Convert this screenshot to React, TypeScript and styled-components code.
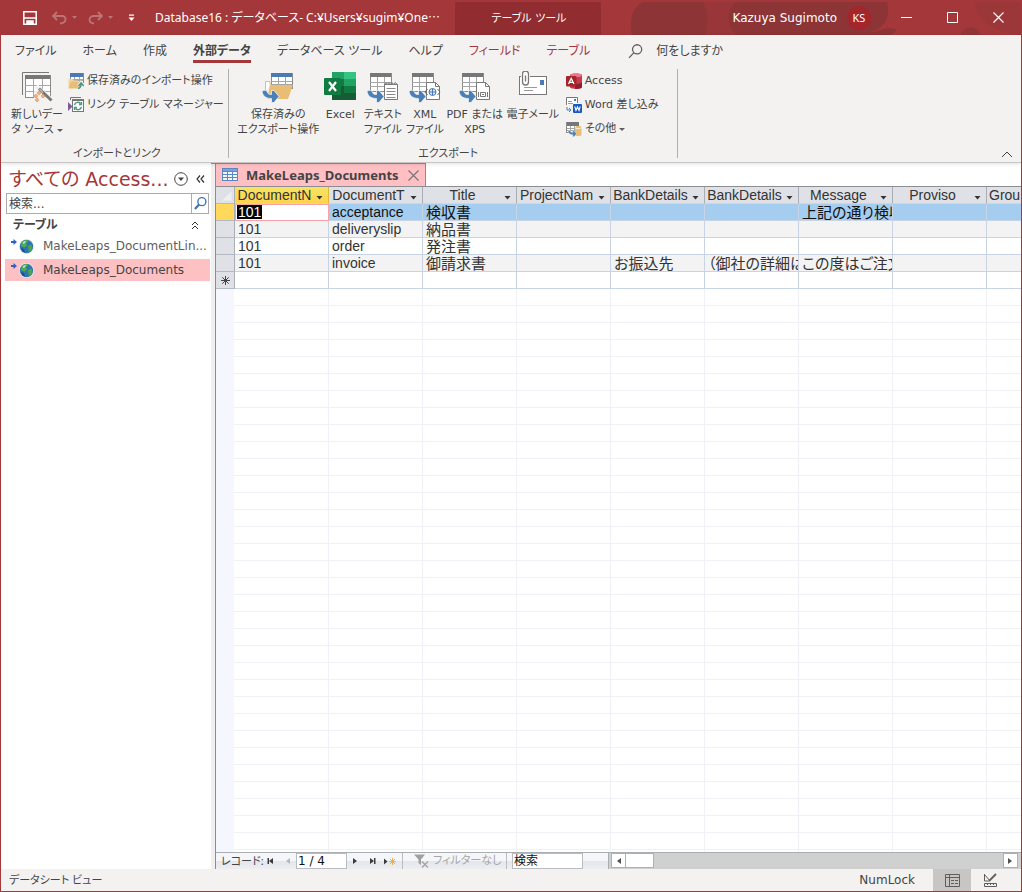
import React from "react";
import styled, { createGlobalStyle, css } from "styled-components";

const red = "#a4373a";
const ui = `"DejaVu Sans", "Noto Sans CJK JP", sans-serif`;
const narrow = `"Noto Sans", "Noto Sans CJK JP", sans-serif`;
const sheet = `"Liberation Sans", "Noto Sans CJK JP", sans-serif`;

const GlobalStyle = createGlobalStyle`
  *, *::before, *::after { box-sizing: border-box; }
  body { margin: 0; background: #fff; }
  button, input { font: inherit; color: inherit; }
  button { background: none; border: 0; padding: 0; margin: 0; cursor: default; }
  h1, h2 { margin: 0; font-weight: 400; }
  svg { display: block; flex: none; }
`;

const Window = styled.div`
  display: flex;
  flex-direction: column;
  height: 100vh;
  min-height: 480px;
  overflow: hidden;
  border: 1px solid ${red};
  border-top: 0;
  font-family: ${ui};
  font-size: 12px;
  line-height: 16px;
  font-feature-settings: "palt";
  color: #444;
`;

/* Title bar */

const TitleBar = styled.header`
  position: relative;
  flex: none;
  display: flex;
  align-items: center;
  height: 35px;
  padding-left: 22px;
  background: ${red};
  color: #fff;
  white-space: nowrap;
`;

const TitleArt = styled.svg`
  position: absolute;
  right: 0;
  top: 2px;
`;

const QuickAccess = styled.div`
  flex: none;
  display: flex;
  align-items: center;
  width: 132px;
`;

const QuickButton = styled.button<{ $w: number; $dim?: boolean }>`
  display: flex;
  align-items: center;
  width: ${(p) => p.$w}px;
  height: 22px;
  opacity: ${(p) => (p.$dim ? 0.3 : 1)};
`;

const DocTitle = styled.h1`
  flex: none;
  width: 300px;
  font-family: ${narrow};
  font-size: 12px;
`;

const MidDots = styled.span`
  font-family: "Noto Sans CJK JP", sans-serif;
`;

const ContextTab = styled.div`
  flex: none;
  align-self: stretch;
  display: flex;
  align-items: center;
  justify-content: center;
  width: 148px;
  margin-top: 2px;
  background: #912c30;
  font-size: 11px;
`;

const Account = styled.div`
  position: relative;
  display: flex;
  align-items: center;
  gap: 10px;
  margin-left: auto;
`;

const Avatar = styled.button`
  width: 24px;
  height: 24px;
  border-radius: 50%;
  background: #a4262c;
  font-family: "Noto Sans", sans-serif;
  font-size: 11px;
`;

const WindowButtons = styled.div`
  position: relative;
  display: flex;
  margin-left: 12px;
`;

const WindowButton = styled.button`
  display: flex;
  align-items: center;
  justify-content: center;
  width: 46px;
  height: 35px;
`;

/* Ribbon */

const Ribbon = styled.section`
  flex: none;
  position: relative;
  z-index: 1;
  background: #f3f2f1;
  border-bottom: 1px solid #c8c6c4;
  box-shadow: 0 1px 4px rgba(0, 0, 0, 0.12);
`;

const Tabs = styled.nav`
  display: flex;
  gap: 26px;
  height: 31px;
  padding: 6px 0 0 14px;
  white-space: nowrap;
`;

const Tab = styled.button<{ $active?: boolean; $context?: boolean }>`
  height: 22px;
  padding-top: 2px;
  padding-bottom: 1px;
  border-bottom: 3px solid ${(p) => (p.$active ? red : "transparent")};
  font-weight: ${(p) => (p.$active ? 700 : 400)};
  color: ${(p) => (p.$context ? red : "#444")};
`;

const TellMe = styled.button`
  display: flex;
  align-items: center;
  gap: 13px;
  height: 20px;
  margin-left: 12px;
`;

const RibbonBody = styled.div`
  display: flex;
  height: 96px;
  padding: 3px 0 4px;
  font-size: 11px;
`;

const Group = styled.section<{ $end: number }>`
  display: flex;
  flex-direction: column;
  justify-content: space-between;
  padding: 0 ${(p) => p.$end}px 0 9px;
  border-right: 1px solid #b3b0ad;
`;

const GroupLabel = styled.h2`
  font-size: 11px;
  line-height: 8px;
  text-align: center;
`;

const GroupItems = styled.div`
  display: flex;
  align-items: flex-start;
`;

const BigButton = styled.button<{ $w: number }>`
  display: flex;
  flex-direction: column;
  align-items: center;
  gap: 4px;
  width: ${(p) => p.$w}px;
  padding-top: 2px;
  line-height: 15px;
  white-space: nowrap;
`;

const BigLabel = styled.span`
  display: block;
  text-align: center;
`;

const SmallStack = styled.div`
  display: flex;
  flex-direction: column;
  margin-left: 4px;
`;

const SmallButton = styled.button`
  display: flex;
  align-items: center;
  gap: 3px;
  height: 24px;
  white-space: nowrap;
`;

const Caret = styled.span`
  display: inline-block;
  margin-left: 3px;
  vertical-align: middle;
  border: 3px solid transparent;
  border-top-color: #605e5c;
  border-bottom: 0;
`;

const Collapse = styled.button`
  margin: auto 8px 0 auto;
`;

/* Workspace */

const Workspace = styled.main`
  flex: 1;
  display: flex;
  min-height: 0;
  background: #fff;
`;

const NavPane = styled.aside`
  flex: none;
  width: 210px;
  padding-top: 2px;
`;

const NavHeading = styled.div`
  display: flex;
  align-items: center;
  height: 28px;
  padding: 0 6px 0 8px;
  color: ${red};
`;

const NavTitle = styled.h2`
  flex: 1;
  font-size: 19px;
  line-height: 26px;
  white-space: nowrap;
`;

const NavIcon = styled.button`
  margin-left: 8px;
  &:first-of-type { margin-left: 0; }
`;

const NavSearch = styled.form`
  display: flex;
  height: 21px;
  margin: 0 2px 0 5px;
  border: 1px solid #ababab;
`;

const SearchInput = styled.input`
  flex: 1;
  min-width: 0;
  padding: 0 2px;
  border: 0;
  color: #444;
  &::placeholder { color: #444; opacity: 1; }
`;

const SearchButton = styled.button`
  display: flex;
  align-items: center;
  justify-content: center;
  width: 17px;
  border-left: 1px solid #ababab;
`;

const NavGroup = styled.button`
  display: flex;
  align-items: center;
  justify-content: space-between;
  width: 100%;
  height: 21px;
  padding: 1px 12px 0;
  font-weight: 700;
`;

const NavList = styled.ul`
  list-style: none;
  margin: 0 1px 0 4px;
  padding: 0;
`;

const NavItem = styled.button<{ $selected?: boolean }>`
  display: flex;
  align-items: center;
  gap: 8px;
  width: 100%;
  height: 22px;
  margin-bottom: 2px;
  padding-left: 6px;
  background: ${(p) => (p.$selected ? "#fdc1c3" : "transparent")};
  color: ${(p) => (p.$selected ? "#444" : "#605e5c")};
  white-space: nowrap;
`;

const Splitter = styled.div`
  flex: none;
  width: 5px;
  background: #f0f0f0;
  border-right: 1px solid #8a8d91;
  border-top: 1px solid #8a8d91;
`;

const DocumentArea = styled.section`
  flex: 1;
  min-width: 0;
  display: flex;
  flex-direction: column;
`;

const DocTab = styled.div`
  align-self: flex-start;
  display: flex;
  align-items: center;
  height: 23px;
  padding: 0 6px;
  background: #ffbfc3;
  border-top: 1px solid #8a8d91;
  border-right: 1px solid #8a8d91;
  font-family: "Noto Sans", sans-serif;
  font-size: 13px;
  font-weight: 700;
`;

const DocTabName = styled.span`
  margin: 0 9px 0 8px;
`;

const Sheet = styled.div`
  flex: 1;
  display: flex;
  flex-direction: column;
  min-height: 0;
  overflow: hidden;
  border-top: 1px solid #8a8d91;
`;

const Grid = styled.table`
  flex: none;
  table-layout: fixed;
  width: 865px;
  border-collapse: separate;
  border-spacing: 0;
  font-family: ${sheet};
  font-size: 14px;
  line-height: 16px;
  color: #333;
`;

const line = "#c9d3e6";

const ColumnHead = styled.th<{ $active?: boolean }>`
  height: 17px;
  padding: 0;
  border-right: 1px solid ${(p) => (p.$active ? "#e0b83a" : "#a9adb4")};
  border-bottom: 1px solid #d0d5de;
  background: ${(p) => (p.$active ? "linear-gradient(#f7e463, #ffd34d)" : "#dfe1e6")};
  font-weight: 400;
`;

const HeadInner = styled.div`
  display: flex;
  align-items: center;
  height: 16px;
  padding: 0 1px 0 2px;
`;

const HeadText = styled.span<{ $start?: boolean }>`
  flex: 1;
  overflow: hidden;
  white-space: nowrap;
  text-align: ${(p) => (p.$start ? "left" : "center")};
`;

const HeadArrow = styled.button`
  width: 15px;
  height: 12px;
  padding: 5px 4px 0;
`;

const Selector = styled.th<{ $current?: boolean }>`
  height: 17px;
  padding: 0 0 0 5px;
  background: ${(p) => (p.$current ? "#ffd85c" : "#dfe1e6")};
  border-right: 1px solid #a9adb4;
  border-bottom: 1px solid #b4b9c2;
`;

const Cell = styled.td<{ $tone: "current" | "alt" | "plain"; $editing?: boolean; $jp?: boolean }>`
  height: 17px;
  padding: 1px 0 0 3px;
  overflow: hidden;
  white-space: nowrap;
  line-height: 15px;
  font-size: ${(p) => (p.$jp ? 15 : 14)}px;
  border-right: 1px solid ${line};
  border-bottom: 1px solid ${line};
  background: ${(p) => ({ current: "#a4cdf0", alt: "#f3f3f3", plain: "#fff" })[p.$tone]};
  color: ${(p) => (p.$tone === "current" ? "#111" : "#333")};
  ${(p) =>
    p.$editing &&
    css`
      background: #fff;
      padding-left: 2px;
      border-color: #f5a3a8;
      box-shadow: inset 1px 1px 0 #f5a3a8;
    `}
`;

const Selection = styled.span`
  display: inline-block;
  height: 14px;
  line-height: 15px;
  padding: 0 1px;
  vertical-align: top;
  background: #000;
  color: #fff;
`;

const EmptyGrid = styled.div`
  flex: 1;
  display: flex;
  background-image: repeating-linear-gradient(
      to bottom,
      transparent 0 16px,
      #f0f1f6 16px 17px
    ),
    repeating-linear-gradient(to right, transparent 0 93px, #f0f1f6 93px 94px);
  background-position: 0 0, 19px 0;
  &::before {
    content: "";
    width: 18px;
    background: #f6f6fe;
  }
`;

const RecordBar = styled.footer`
  flex: none;
  display: flex;
  align-items: stretch;
  height: 17px;
  border-top: 1px solid #a9adb4;
  background: #d0d0d0;
`;

const RecordNav = styled.div`
  flex: none;
  display: flex;
  align-items: center;
  width: 393px;
  padding-left: 5px;
  background: linear-gradient(#f4f6f9, #f4f6f9 50%, #e3e6ea 50%, #eceef2);
  border-right: 1px solid #a9adb4;
  white-space: nowrap;
`;

const NavBtn = styled.button`
  flex: none;
  display: flex;
  align-items: center;
  justify-content: center;
  width: 17px;
  height: 16px;
`;

const RecordLabel = styled.label`
  flex: none;
  width: 41px;
  font-family: ${narrow};
  font-size: 11px;
`;

const RecordInput = styled.input<{ $w: number }>`
  flex: none;
  width: ${(p) => p.$w}px;
  height: 16px;
  padding: 0 1px;
  border: 1px solid #b9bcc2;
  background: #fff;
  color: #111;
  &::placeholder { color: #111; opacity: 1; }
`;

const FilterButton = styled.button`
  flex: none;
  display: flex;
  align-items: center;
  gap: 4px;
  height: 16px;
  width: 105px;
  margin: 0 5px 0 4px;
  padding-left: 11px;
  border: solid #b9bcc2;
  border-width: 0 1px;
  color: #a6a6a6;
  font-size: 11px;
`;

const ScrollTrack = styled.div`
  flex: 1;
  display: flex;
  padding: 0 3px 0 2px;
`;

const ScrollButton = styled.button`
  display: flex;
  align-items: center;
  justify-content: center;
  width: 15px;
  height: 15px;
  background: #fff;
  border: 1px solid #b0b0b0;
  &:last-child { margin-left: auto; }
`;

const ScrollThumb = styled.div`
  width: 28px;
  height: 15px;
  background: #fff;
  border: 1px solid #b0b0b0;
  border-left: 0;
`;

const StatusBar = styled.footer`
  flex: none;
  display: flex;
  align-items: center;
  height: 22px;
  padding: 0 12px 0 8px;
  background: #f3f2f1;
`;

const StatusText = styled.span`
  font-family: ${narrow};
  font-size: 11px;
`;

const KeyState = styled.span`
  margin-left: auto;
  margin-right: 18px;
`;

const ViewButton = styled.button<{ $active?: boolean }>`
  display: flex;
  align-items: center;
  justify-content: center;
  width: 38px;
  height: 22px;
  background: ${(p) => (p.$active ? "#c8c6c4" : "transparent")};
`;

/* Drawings */

const Arrow = ({ x = 0, y = 0, s = 1 }: { x?: number; y?: number; s?: number }) => (
  <g transform={`translate(${x} ${y}) scale(${s})`}>
    <path
      d="M0 0C3 -1.500 5 -0.500 5.500 1.500C6 3 7.500 3.500 9.500 3.500V-0.500H12L17 5.500L12 11.500H9.500V7.500C4 7.500 0.500 5 0 0Z"
      fill="#4a80b8"
      stroke="#f3f2f1"
      strokeWidth="0.800"
    />
  </g>
);

const Sheet3 = ({ x, y, w = 22, h = 19, head = "#777" }: { x: number; y: number; w?: number; h?: number; head?: string }) => (
  <g shapeRendering="crispEdges">
    <rect x={x} y={y} width={w} height={h} fill="#fff" stroke="#8a8a8a" />
    <rect x={x} y={y} width={w} height={4} fill={head} />
    {[1, 2].map((i) => (
      <path key={i} d={`M${x + Math.round((w * i) / 3)} ${y + 4}v${h - 4}M${x} ${y + 4 + Math.round(((h - 4) * i) / 3)}h${w}`} stroke="#a6a6a6" fill="none" />
    ))}
  </g>
);

const NewSourceIcon = () => (
  <svg width="32" height="32" viewBox="0 0 32 32">
    <path d="M1.500 24V1.500H28" stroke="#777" fill="none" />
    <Sheet3 x={4} y={4} w={25} h={22} />
    <path d="M15 15L31 30" stroke="#f3f2f1" strokeWidth="5" />
    <path d="M13 20H24V31H13Z" fill="#f3f2f1" opacity="0.9" />
    <path d="M18 17.500L30.500 29.500" stroke="#777" strokeWidth="3" />
    <path d="M18.500 18L22 21.500" stroke="#bbb" strokeWidth="1.500" />
    {[[18, 22], [15, 25], [22, 25], [16, 29]].map(([x, y]) => (
      <circle key={`${x}-${y}`} cx={x} cy={y} r="1.300" fill="#fff" stroke="#e07a35" />
    ))}
  </svg>
);

const SavedImportIcon = () => (
  <svg width="16" height="16" viewBox="0 0 16 16">
    <Sheet3 x={2} y={0} w={13} h={9} head="#4a7ab5" />
    <path d="M0.500 14V6H5L6 7.500H10L9 15H0.500Z" fill="#f4d49c" />
    <path d="M3 8.500H13L11 15.500H0.500Z" fill="#e8bd76" />
    <path d="M10 16C12.500 15.500 13 13.500 13 11.500M10.500 13L13 10L15.800 13" stroke="#f3f2f1" strokeWidth="3.500" fill="none" />
    <path d="M10 15.500C12.500 15 13 13.500 13 11M10.500 13L13 10L15.800 13" stroke="#4d9a82" strokeWidth="1.600" fill="none" />
  </svg>
);

const LinkedTableIcon = () => (
  <svg width="16" height="16" viewBox="0 0 16 16">
    <path d="M2.500 3V0.500H13" stroke="#777" fill="none" />
    <rect x="4.500" y="2.500" width="11" height="12" fill="#fff" stroke="#777" />
    <path d="M4 3H16" stroke="#777" strokeWidth="2" />
    <path d="M6.500 8A3.500 3.500 0 0 1 12.500 6.500M13.500 5V7.500H11M13.500 10A3.500 3.500 0 0 1 7.500 11.500M6.500 13V10.500H9" stroke="#4d9a82" strokeWidth="1.400" fill="none" />
    <path d="M0 5L4.500 9.500L0 14Z" fill="#7b5ba6" />
  </svg>
);

const SavedExportIcon = () => (
  <svg width="32" height="32" viewBox="0 0 32 32">
    <Sheet3 x={9} y={2} w={21} h={15} head="#4a7ab5" />
    <path d="M3.500 20V10.500H8V14" stroke="#e8bd76" fill="#fff" />
    <path d="M8 14H31L26 28H5Z" fill="#e8bd76" />
    <Arrow x={0} y={20} />
  </svg>
);

const ExcelIcon = () => (
  <svg width="32" height="32" viewBox="0 0 32 32">
    <path d="M8 1H20V8H8Z" fill="#21a366" />
    <path d="M20 1H32V8H20Z" fill="#33c481" />
    <path d="M8 8H20V15H8Z" fill="#107c41" />
    <path d="M20 8H32V15H20Z" fill="#21a366" />
    <path d="M8 15H20V22H8Z" fill="#185c37" />
    <path d="M20 15H32V22H20Z" fill="#107c41" />
    <path d="M8 22H32V29H8Z" fill="#185c37" />
    <rect x="0" y="7" width="17" height="17" rx="1" fill="#107c41" />
    <path d="M5 11L12 20M12 11L5 20" stroke="#fff" strokeWidth="2.200" />
  </svg>
);

const ExportIcon = ({ kind }: { kind: "text" | "xml" | "pdf" }) => (
  <svg width="32" height="32" viewBox="0 0 32 32">
    <Sheet3 x={3} y={2} w={21} h={18} />
    {kind === "text" ? (
      <g>
        <path d="M17.500 13.500H30.500V28.500H17.500Z" fill="#fff" stroke="#777" />
        <path d="M17.500 13.500L19 11.500L20.500 13.500L22 11.500L23.500 13.500L25 11.500L26.500 13.500L28 11.500L30.500 13.500" stroke="#777" fill="none" />
        <path d="M19.500 17.500h9M19.500 20.500h9M19.500 23.500h9M19.500 26.500h9" stroke="#8a8a8a" />
      </g>
    ) : (
      <g>
        <path d="M17.500 11.500H26.500L30.500 15.500V28.500H17.500Z" fill="#fff" stroke="#777" />
        <path d="M26.500 11.500V15.500H30.500" stroke="#777" fill="none" />
      </g>
    )}
    {kind === "xml" && (
      <g fill="none">
        <circle cx="23.500" cy="21" r="3.500" stroke="#4a7ab5" fill="#dbe8f5" />
        <path d="M20 21h7M23.500 17.500v7" stroke="#4a7ab5" />
        <path d="M18.500 18L16 21L18.500 24M28.500 18L31 21L28.500 24" stroke="#666" />
      </g>
    )}
    {kind === "pdf" && (
      <g fill="none" stroke="#777">
        <path d="M21.500 21.500H26.500V25.500H21.500Z" fill="#fff" />
        <path d="M19.500 21v5M28.500 21v5M23 23.500h2" />
      </g>
    )}
    <Arrow x={0} y={20} />
  </svg>
);

const MailIcon = () => (
  <svg width="32" height="32" viewBox="0 0 32 32">
    <rect x="2.500" y="5.500" width="27" height="18" fill="#fff" stroke="#777" />
    <rect x="23" y="9" width="4" height="5" fill="#4a7ab5" />
    <path d="M7 16.500H20M7 19.500H16" stroke="#999" />
    <path d="M5.500 11V4A3 3 0 0 1 11.500 4V11A3 3 0 0 1 5.500 11" stroke="#fff" strokeWidth="3" fill="#fff" />
    <path d="M8.500 4.500V10.500M5.500 11V3A3 3 0 0 1 11.500 3V11A3 3 0 0 1 5.500 11" stroke="#777" strokeWidth="1.300" fill="none" />
  </svg>
);

const AccessIcon = () => (
  <svg width="16" height="16" viewBox="0 0 16 16">
    <path d="M4 2C4 0 16 0 16 2V14C16 16.500 4 16.500 4 14Z" fill="#c73a4b" />
    <path d="M4 2C4 0 16 0 16 2C16 5 4 5 4 2Z" fill="#e8788a" />
    <path d="M9 16C13 16 16 15 16 14V9C14 11 12 11 9 11Z" fill="#8f1d2c" />
    <rect x="0" y="3" width="10.500" height="10.500" rx="1" fill="#a4262c" />
    <path d="M2.500 11L5.200 5.500L8 11M3.500 9.300H7" stroke="#fff" strokeWidth="1.300" fill="none" />
  </svg>
);

const WordIcon = () => (
  <svg width="16" height="16" viewBox="0 0 16 16">
    <path d="M0.500 8V0.500H11.500V6" stroke="#777" fill="#fff" />
    <rect x="8" y="2" width="2" height="2" fill="#4a7ab5" />
    <path d="M2 4.500h4M2 6.500h5" stroke="#999" />
    <path d="M1 10V13H4.500M3 11L5 13L3 15" stroke="#4a80b8" fill="none" />
    <rect x="7" y="7" width="9" height="9" rx="1" fill="#185abd" />
    <path d="M8.800 9.500L10 13.500L11.500 10L13 13.500L14.200 9.500" stroke="#fff" strokeWidth="1.100" fill="none" />
  </svg>
);

const OtherIcon = () => (
  <svg width="16" height="16" viewBox="0 0 16 16">
    <Sheet3 x={0.5} y={1} w={12} h={10} />
    <path d="M9 6C9 4.500 15.500 4.500 15.500 6V14C15.500 15.500 9 15.500 9 14Z" fill="#e8bd76" />
    <path d="M9 6.500C9 8 15.500 8 15.500 6.500" stroke="#fff" strokeWidth="0.800" fill="none" />
    <Arrow x={2} y={10} s={0.5} />
  </svg>
);

const Globe = () => (
  <svg width="24" height="16" viewBox="0 0 24 16">
    <circle cx="15.500" cy="8.500" r="7.500" fill="#e6edf2" />
    <circle cx="15.500" cy="8.500" r="6.700" fill="#2f74b5" />
    <path d="M11 4C13 1.500 17 1.500 17.500 3L15 5.500L16 7.500L13.500 9.500L10 8Z" fill="#4fae4a" />
    <path d="M17 8L20.500 6.500L21.500 9C21 12 19.500 13.500 18 14L17.500 11.500Z" fill="#4aa648" />
    <path d="M11.500 5C12.500 3.500 14 3 15 3.500L13 6Z" fill="#bfe3f5" />
    <path d="M10 10L13 11L14 14.500C12 14 10.500 12.500 10 10Z" fill="#1d4f86" />
    <path d="M0 3H2.500V1L6 4L2.500 7V5H0Z" fill="#2f62c4" />
  </svg>
);

const TableIcon = () => (
  <svg width="16" height="14" viewBox="0 0 16 14" shapeRendering="crispEdges">
    <rect x="0" y="0" width="16" height="13" fill="#5b87c5" />
    <path d="M1 4h4v2h-4zM6 4h4v2h-4zM11 4h4v2h-4zM1 7h4v2h-4zM6 7h4v2h-4zM11 7h4v2h-4zM1 10h4v2h-4zM6 10h4v2h-4zM11 10h4v2h-4z" fill="#f2f7fd" />
    <path d="M1 1h14v2H1z" fill="#7ba3d8" />
  </svg>
);

const Tri = ({ dir, bar, color = "#3b3b3b" }: { dir: "l" | "r"; bar?: boolean; color?: string }) => (
  <svg width="9" height="8" viewBox="0 0 9 8">
    <g transform={dir === "l" ? "translate(9 0) scale(-1 1)" : undefined} fill={color}>
      <path d="M2 1V7L6 4Z" />
      {bar && <path d="M6 1h1.500v6H6z" />}
    </g>
  </svg>
);

const Search = ({ color, w = 1.2, size = 14, flip }: { color: string; w?: number; size?: number; flip?: boolean }) => (
  <svg width={size} height={size} viewBox="0 0 14 14" fill="none" stroke={color} strokeWidth={w}>
    <circle cx="8.500" cy="5" r="4.300" />
    <path d="M5.500 8L1 13" strokeWidth={flip ? 2.4 : w} />
  </svg>
);

/* Data */

const columns = ["DocumentN", "DocumentT", "Title", "ProjectNam", "BankDetails", "BankDetails", "Message", "Proviso", "Grou"];

const rows: string[][] = [
  ["101", "acceptance", "検収書", "", "", "", "上記の通り検収", "", ""],
  ["101", "deliveryslip", "納品書", "", "", "", "", "", ""],
  ["101", "order", "発注書", "", "", "", "", "", ""],
  ["101", "invoice", "御請求書", "", "お振込先", "（御社の詳細は", "この度はご注文", "", ""],
  ["", "", "", "", "", "", "", "", ""],
];

const exportsList: { label: string[]; width: number; icon: React.ReactNode }[] = [
  { label: ["保存済みの", "エクスポート操作"], width: 81, icon: <SavedExportIcon /> },
  { label: ["Excel"], width: 43, icon: <ExcelIcon /> },
  { label: ["テキスト", "ファイル"], width: 42, icon: <ExportIcon kind="text" /> },
  { label: ["XML", "ファイル"], width: 42, icon: <ExportIcon kind="xml" /> },
  { label: ["PDF または", "XPS"], width: 58, icon: <ExportIcon kind="pdf" /> },
  { label: ["電子メール"], width: 58, icon: <MailIcon /> },
];

export default function App() {
  return (
    <Window lang="ja">
      <GlobalStyle />
      <TitleBar>
        <TitleArt width="420" height="33" viewBox="0 0 420 33" aria-hidden="true">
          <rect width="420" height="33" fill="#a4373a" />
          <path d="M31 33C28 20 31 5 42 0H102C108 10 108 24 104 33Z" fill="#8c3436" />
          <path d="M104 33C108 24 108 10 102 0H134C126 10 124 22 136 33Z" fill="#983639" />
          <path d="M136 33C124 22 126 10 134 0H286C290 14 284 26 270 30L296 28L288 33Z" fill="#8c3436" />
          <path d="M268 33C276 28 288 24 296 28L290 33Z" fill="#8c3436" />
          <path d="M360 33C362 24 376 22 380 33Z" fill="#913538" />
          <path d="M374 0C376 20 394 30 420 33V0Z" fill="#9b3639" />
        </TitleArt>
        <QuickAccess>
          <QuickButton $w={29} aria-label="上書き保存">
            <svg width="14" height="14" viewBox="0 0 14 14" fill="none" stroke="#fff" strokeWidth="1.500">
              <path d="M0.800 0.800H13.200V13.200H0.800ZM1 7H13" />
              <path d="M4 13V10H10V13" fill="#fff" />
            </svg>
          </QuickButton>
          <QuickButton $w={36} $dim aria-label="元に戻す">
            <svg width="27" height="14" viewBox="0 0 27 14" fill="none" stroke="#fff" strokeWidth="1.800">
              <path d="M5 1L1 5L5 9M1 5H10C15 5 15 12 8 12.500" />
              <path d="M20 5H25L22.500 8Z" fill="#fff" stroke="none" />
            </svg>
          </QuickButton>
          <QuickButton $w={39} $dim aria-label="やり直し">
            <svg width="27" height="14" viewBox="0 0 27 14" fill="none" stroke="#fff" strokeWidth="1.800">
              <path d="M10 1L14 5L10 9M14 5H6C0 5 0 12 6 12.500" />
              <path d="M20 5H25L22.500 8Z" fill="#fff" stroke="none" />
            </svg>
          </QuickButton>
          <QuickButton $w={10} aria-label="クイック アクセス ツール バーのカスタマイズ">
            <svg width="9" height="8" viewBox="0 0 9 8" fill="#fff">
              <path d="M2 0.500H7V1.700H2ZM1.500 3.500H7.500L4.500 7Z" />
            </svg>
          </QuickButton>
        </QuickAccess>
        <DocTitle>
          Database16 : データベース- C:¥Users¥sugim¥One<MidDots>…</MidDots>
        </DocTitle>
        <ContextTab>テーブル ツール</ContextTab>
        <Account>
          <span>Kazuya Sugimoto</span>
          <Avatar>KS</Avatar>
        </Account>
        <WindowButtons>
          <WindowButton aria-label="最小化">
            <svg width="11" height="11" viewBox="0 0 11 11"><path d="M0 5.500H11" stroke="#fff" /></svg>
          </WindowButton>
          <WindowButton aria-label="最大化">
            <svg width="11" height="11" viewBox="0 0 11 11"><path d="M0.500 0.500H10.500V10.500H0.500Z" stroke="#fff" fill="none" /></svg>
          </WindowButton>
          <WindowButton aria-label="閉じる">
            <svg width="11" height="11" viewBox="0 0 11 11"><path d="M0.500 0.500L10.500 10.500M10.500 0.500L0.500 10.500" stroke="#fff" strokeWidth="1.200" /></svg>
          </WindowButton>
        </WindowButtons>
      </TitleBar>

      <Ribbon>
        <Tabs>
          <Tab>ファイル</Tab>
          <Tab>ホーム</Tab>
          <Tab>作成</Tab>
          <Tab $active>外部データ</Tab>
          <Tab>データベース ツール</Tab>
          <Tab>ヘルプ</Tab>
          <Tab $context>フィールド</Tab>
          <Tab $context>テーブル</Tab>
          <TellMe>
            <Search color="#605e5c" size={15} />
            何をしますか
          </TellMe>
        </Tabs>
        <RibbonBody>
          <Group $end={4}>
            <GroupItems>
              <BigButton $w={54}>
                <NewSourceIcon />
                <BigLabel>
                  新しいデー
                  <br />タ ソース
                  <Caret />
                </BigLabel>
              </BigButton>
              <SmallStack>
                <SmallButton>
                  <SavedImportIcon />
                  保存済みのインポート操作
                </SmallButton>
                <SmallButton>
                  <LinkedTableIcon />
                  リンク テーブル マネージャー
                </SmallButton>
              </SmallStack>
            </GroupItems>
            <GroupLabel>インポートとリンク</GroupLabel>
          </Group>
          <Group $end={18}>
            <GroupItems>
              {exportsList.map((item) => (
                <BigButton key={item.label.join()} $w={item.width}>
                  {item.icon}
                  <BigLabel>
                    {item.label.map((part, i) => (
                      <React.Fragment key={part}>
                        {i > 0 && <br />}
                        {part}
                      </React.Fragment>
                    ))}
                  </BigLabel>
                </BigButton>
              ))}
              <SmallStack>
                <SmallButton>
                  <AccessIcon />
                  Access
                </SmallButton>
                <SmallButton>
                  <WordIcon />
                  Word 差し込み
                </SmallButton>
                <SmallButton>
                  <OtherIcon />
                  <span>
                    その他
                    <Caret />
                  </span>
                </SmallButton>
              </SmallStack>
            </GroupItems>
            <GroupLabel>エクスポート</GroupLabel>
          </Group>
          <Collapse aria-label="リボンを折りたたむ">
            <svg width="12" height="7" viewBox="0 0 12 7"><path d="M1 6L6 1L11 6" stroke="#444" fill="none" /></svg>
          </Collapse>
        </RibbonBody>
      </Ribbon>

      <Workspace>
        <NavPane>
          <NavHeading>
            <NavTitle>すべての Access...</NavTitle>
            <NavIcon aria-label="ナビゲーション メニュー">
              <svg width="14" height="14" viewBox="0 0 14 14">
                <circle cx="7" cy="7" r="6.300" fill="none" stroke="#444" />
                <path d="M4 5.500H10L7 9Z" fill="#444" />
              </svg>
            </NavIcon>
            <NavIcon aria-label="ウィンドウを閉じる">
              <svg width="9" height="8" viewBox="0 0 9 8"><path d="M4 0.500L1 4L4 7.500M8 0.500L5 4L8 7.500" stroke="#333" strokeWidth="1.200" fill="none" /></svg>
            </NavIcon>
          </NavHeading>
          <NavSearch>
            <SearchInput aria-label="検索" placeholder="検索..." />
            <SearchButton type="button" aria-label="検索の実行">
              <Search color="#3f75b5" w={1.5} size={13} flip />
            </SearchButton>
          </NavSearch>
          <NavGroup>
            テーブル
            <svg width="8" height="9" viewBox="0 0 8 9"><path d="M1 4L4 1L7 4M1 8L4 5L7 8" stroke="#333" fill="none" /></svg>
          </NavGroup>
          <NavList>
            <li>
              <NavItem><Globe />MakeLeaps_DocumentLin...</NavItem>
            </li>
            <li>
              <NavItem $selected><Globe />MakeLeaps_Documents</NavItem>
            </li>
          </NavList>
        </NavPane>
        <Splitter />
        <DocumentArea>
          <DocTab>
            <TableIcon />
            <DocTabName>MakeLeaps_Documents</DocTabName>
            <button aria-label="タブを閉じる">
              <svg width="11" height="11" viewBox="0 0 11 11"><path d="M0.500 0.500L10.500 10.500M10.500 0.500L0.500 10.500" stroke="#777" strokeWidth="1.200" /></svg>
            </button>
          </DocTab>
          <Sheet>
            <Grid>
              <colgroup>
                <col style={{ width: 19 }} />
                {columns.map((_, i) => <col key={i} style={{ width: 94 }} />)}
              </colgroup>
              <thead>
                <tr>
                  <Selector aria-label="すべて選択">
                    <svg width="11" height="11" viewBox="0 0 11 11"><path d="M11 0V11H0Z" fill="#eceff3" stroke="#cdd6e2" strokeWidth="0.500" /></svg>
                  </Selector>
                  {columns.map((name, i) => (
                    <ColumnHead key={i} $active={i === 0}>
                      <HeadInner>
                        <HeadText $start={i === 8}>{name}</HeadText>
                        {i < 8 && (
                          <HeadArrow aria-label={`${name} の並べ替え`}>
                            <svg width="7" height="5" viewBox="0 0 7 5"><path d="M0.500 1H6.500L3.500 4.500Z" fill="#333" /></svg>
                          </HeadArrow>
                        )}
                      </HeadInner>
                    </ColumnHead>
                  ))}
                </tr>
              </thead>
              <tbody>
                {rows.map((row, r) => (
                  <tr key={r}>
                    <Selector scope="row" $current={r === 0}>
                      {r === 4 && (
                        <svg width="9" height="9" viewBox="0 0 9 9"><path d="M4.500 0V9M0 4.500H9M1.300 1.300L7.700 7.700M7.700 1.300L1.300 7.700" stroke="#444" /></svg>
                      )}
                    </Selector>
                    {row.map((value, c) => (
                      <Cell
                        key={c}
                        $tone={r === 0 ? "current" : r % 2 ? "alt" : "plain"}
                        $editing={r === 0 && c === 0}
                        $jp={c >= 2}
                      >
                        {r === 0 && c === 0 ? <Selection>{value}</Selection> : value}
                      </Cell>
                    ))}
                  </tr>
                ))}
              </tbody>
            </Grid>
            <EmptyGrid />
          </Sheet>
          <RecordBar>
            <RecordNav>
              <RecordLabel htmlFor="record">レコード:</RecordLabel>
              <NavBtn aria-label="先頭レコード"><Tri dir="l" bar /></NavBtn>
              <NavBtn aria-label="前のレコード"><Tri dir="l" color="#b5b8bd" /></NavBtn>
              <RecordInput id="record" $w={51} defaultValue="1 / 4" />
              <NavBtn aria-label="次のレコード"><Tri dir="r" /></NavBtn>
              <NavBtn aria-label="最終レコード"><Tri dir="r" bar /></NavBtn>
              <NavBtn aria-label="新しいレコード">
                <svg width="14" height="9" viewBox="0 0 14 9">
                  <path d="M1 1.500V7.500L4.500 4.500Z" fill="#3b3b3b" />
                  <path d="M9.500 1V8M6 4.500H13M7 2L12 7M12 2L7 7" stroke="#eeb04c" />
                </svg>
              </NavBtn>
              <FilterButton>
                <svg width="15" height="14" viewBox="0 0 15 14">
                  <path d="M0 0.500H11L7 5.500V11L4.500 9V5.500Z" fill="#a0a0a0" />
                  <path d="M8 7.500L14 13.500M14 7.500L8 13.500" stroke="#a0a0a0" strokeWidth="1.200" />
                </svg>
                フィルターなし
              </FilterButton>
              <RecordInput aria-label="検索" $w={71} placeholder="検索" />
            </RecordNav>
            <ScrollTrack>
              <ScrollButton aria-label="左へスクロール"><Tri dir="l" color="#505050" /></ScrollButton>
              <ScrollThumb />
              <ScrollButton aria-label="右へスクロール"><Tri dir="r" color="#505050" /></ScrollButton>
            </ScrollTrack>
          </RecordBar>
        </DocumentArea>
      </Workspace>

      <StatusBar>
        <StatusText>データシート ビュー</StatusText>
        <KeyState>NumLock</KeyState>
        <ViewButton $active aria-label="データシート ビュー">
          <svg width="15" height="13" viewBox="0 0 15 13" fill="none" stroke="#605e5c">
            <path d="M0.500 0.500H14.500V12.500H0.500ZM0.500 3.500H14.500M4.500 0.500V12.500" />
            <path d="M6 6.500h3M10 6.500h3M6 9.500h3M10 9.500h3" />
          </svg>
        </ViewButton>
        <ViewButton aria-label="デザイン ビュー">
          <svg width="15" height="14" viewBox="0 0 15 14" fill="none" stroke="#605e5c">
            <path d="M1.500 1V8H7L1.500 1.500" />
            <path d="M6.500 7.500L13 1" strokeWidth="1.800" />
            <path d="M1.500 10.500H13.500V13.500H1.500ZM4.500 10.500v1.500M7.500 10.500v1.500M10.500 10.500v1.500" />
          </svg>
        </ViewButton>
      </StatusBar>
    </Window>
  );
}
